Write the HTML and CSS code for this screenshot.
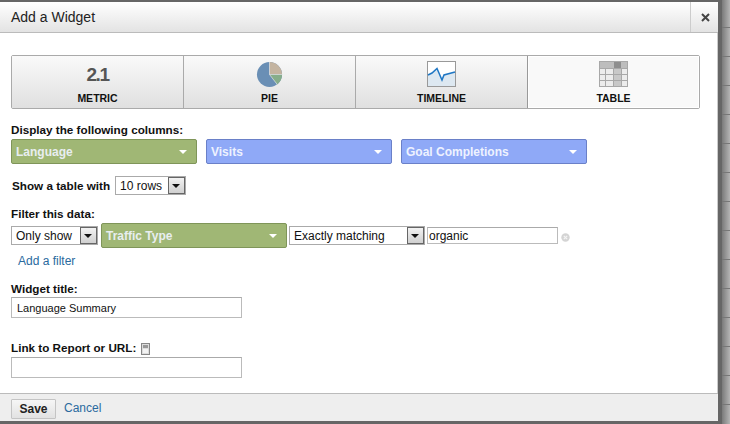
FILE: index.html
```html
<!DOCTYPE html>
<html>
<head>
<meta charset="utf-8">
<title>Add a Widget</title>
<link rel="stylesheet" href="styles.css">
</head>
<body>
<div class="page">
  <div class="dialog">
    <header class="head">
      <h1 class="title">Add a Widget</h1>
      <div class="close">
        <svg width="9" height="9" viewBox="0 0 9 9"><path d="M1 1l7 7M8 1l-7 7" stroke="#444" stroke-width="2"/></svg>
      </div>
    </header>
    <main class="body">
      <div class="tabs">
        <div class="tab">
          <div class="tab-icon metric">2.1</div>
          <div class="tab-label">METRIC</div>
        </div>
        <div class="tab">
          <div class="tab-icon">
            <svg class="pie" width="27" height="27" viewBox="0 0 28 28">
              <circle cx="14" cy="14" r="13" fill="#6a8fb5"/>
              <path d="M14 14V1A13 13 0 0 1 27 14Z" fill="#c4b4a0"/>
              <path d="M14 14H27A13 13 0 0 1 22 24.300Z" fill="#86ad8a"/>
              <path d="M14 14V1M14 14H27M14 14L22 24.300" stroke="#e8e8e8" stroke-width=".7"/>
            </svg>
          </div>
          <div class="tab-label">PIE</div>
        </div>
        <div class="tab">
          <div class="tab-icon">
            <svg width="29" height="26" viewBox="0 0 29 26">
              <rect x=".5" y=".5" width="28" height="25" fill="#fff" stroke="#999"/>
              <path d="M1 14L5 12L10 7.500L15 19L17 14L28 11V25H1Z" fill="#dde8f1"/>
              <path d="M1 14L5 12L10 7.500L15 19L17 14L28 11" fill="none" stroke="#1f77c4" stroke-width="1.500"/>
            </svg>
          </div>
          <div class="tab-label">TIMELINE</div>
        </div>
        <div class="tab active">
          <div class="tab-icon">
            <svg width="29" height="26" viewBox="0 0 29 26">
              <rect width="29" height="26" fill="#a8a8a8"/>
              <rect x="1" y="1" width="27" height="6" fill="#bdbdbd"/>
              <rect x="15" y="1" width="7" height="6" fill="#8e8e8e"/>
              <g fill="#ececec">
                <rect x="1" y="8" width="5" height="5"/><rect x="7" y="8" width="7" height="5"/><rect x="23" y="8" width="5" height="5"/>
                <rect x="1" y="14" width="5" height="5"/><rect x="7" y="14" width="7" height="5"/><rect x="23" y="14" width="5" height="5"/>
                <rect x="1" y="20" width="5" height="5"/><rect x="7" y="20" width="7" height="5"/><rect x="23" y="20" width="5" height="5"/>
              </g>
              <g fill="#c8c8c8">
                <rect x="15" y="8" width="7" height="5"/><rect x="15" y="14" width="7" height="5"/><rect x="15" y="20" width="7" height="5"/>
              </g>
            </svg>
          </div>
          <div class="tab-label">TABLE</div>
        </div>
      </div>

      <div class="label first">Display the following columns:</div>
      <div class="row pills">
        <div class="pill green">Language<span class="arrow"></span></div>
        <div class="pill blue">Visits<span class="arrow"></span></div>
        <div class="pill blue">Goal Completions<span class="arrow"></span></div>
      </div>

      <div class="row show">
        <span class="label inline">Show a table with</span>
        <div class="select s-rows">10 rows<span class="sel-btn"></span></div>
      </div>

      <div class="label filter-label">Filter this data:</div>
      <div class="row filter">
        <div class="select s-only">Only show<span class="sel-btn"></span></div>
        <div class="pill green">Traffic Type<span class="arrow"></span></div>
        <div class="select s-match">Exactly matching<span class="sel-btn"></span></div>
        <input class="input i-value" type="text" value="organic">
        <svg class="remove" width="9" height="9" viewBox="0 0 9 9"><circle cx="4.500" cy="4.500" r="4.200" fill="#d4d4d4"/><path d="M2.800 2.800l3.400 3.400M6.200 2.800l-3.400 3.400" stroke="#f4f4f4" stroke-width="1.200"/></svg>
      </div>
      <a class="link add" href="#">Add a filter</a>

      <div class="label title-label">Widget title:</div>
      <input class="input wide small" type="text" value="Language Summary">

      <div class="label url-label">Link to Report or URL:
        <svg class="doc" width="9" height="12" viewBox="0 0 9 12"><rect x=".5" y=".5" width="8" height="11" fill="#ddd" stroke="#888"/><rect x="2" y="2" width="5" height="3" fill="#999"/><rect x="2" y="6" width="5" height="4" fill="#f4f4f4"/></svg>
      </div>
      <input class="input wide" type="text">
    </main>
    <footer class="foot">
      <button class="save" type="button">Save</button>
      <a class="link cancel" href="#">Cancel</a>
    </footer>
  </div>
  <div class="backdrop"></div>
</div>
</body>
</html>
```
FILE: styles.css
```css
* { box-sizing: border-box; }
html, body { margin: 0; height: 424px; overflow: hidden; }
body { background: #666; font-family: "Liberation Sans", Arial, sans-serif; font-size: 12px; color: #111; }

.page { display: flex; height: 424px; padding-top: 2px; }
.dialog {
  width: 722px; height: 419px; flex: none;
  background: #fff;
  border-right: 4px solid #666;
  display: flex; flex-direction: column;
  box-shadow: inset -1px 0 0 #ccc;
}
.backdrop {
  flex: 1; margin-top: -2px;
  background-color: #8a8a8a;
  background-image:
    repeating-linear-gradient(180deg, transparent 0 28px, #777 28px 29px),
    linear-gradient(90deg, #7a7a7a, #b4b4b4);
  background-position: 0 -1px, 0 0;
}

.head {
  height: 31px; flex: none;
  display: flex; justify-content: space-between;
  background: linear-gradient(180deg, #fff, #e3e3e3);
  border-bottom: 1px solid #bbb;
}
.title { margin: 0; padding: 6px 0 0 11px; font-size: 14px; font-weight: normal; line-height: 18px; color: #222; }
.close { width: 29px; border-left: 1px solid #ccc; display: flex; align-items: center; justify-content: center; margin-right: -1px; }

.body { flex: 1; padding: 22px 0 0 11px; }

.tabs { display: flex; width: 689px; height: 54px; border: 1px solid #aaa; border-radius: 2px; }
.tab {
  flex: 1; display: flex; flex-direction: column; align-items: center;
  background: linear-gradient(180deg, #fafafa, #e0e0e0);
  border-right: 1px solid #aaa;
}
.tab:last-child { border-right: 0; }
.tab.active { background: #f9f9f9; box-shadow: inset 0 0 0 1px #fff; border-left: 1px solid #999; margin-left: -1px; }
.tab-icon { height: 29px; margin-top: 5px; display: flex; align-items: flex-start; justify-content: center; }
.tab-icon svg { display: block; }
.tab-icon .pie { margin-right: 1px; }
.metric { font-size: 19px; font-weight: bold; color: #555; line-height: 28px; letter-spacing: -1.5px; }
.tab-label { font-size: 10.500px; font-weight: bold; line-height: 14px; color: #111; margin-top: 1px; }

.label { font-weight: bold; font-size: 11.700px; line-height: 14px; color: #111; }
.label.first { margin-top: 14px; }
.row { display: flex; align-items: center; }

.pills { gap: 9px; margin-top: 2px; }
.pill {
  width: 186px; height: 25px; flex: none; position: relative;
  border: 1px solid; border-radius: 2px;
  padding-left: 4px;
  font-weight: bold; font-size: 12px; line-height: 24px; color: #e8eef0;
}
.pill.green { background: #a0b775; border-color: #7f9559; }
.pill.blue { background: #8fa9f7; border-color: #6a80c8; color: #eef2ff; }
.arrow {
  position: absolute; right: 9px; top: 10px;
  border-left: 4px solid transparent; border-right: 4px solid transparent; border-top: 4px solid #fff;
}

.select {
  height: 19px; flex: none; position: relative;
  background: #fff; border: 1px solid #aaa;
  padding-left: 4px;
  font-size: 12px; line-height: 18px; color: #111;
}
.sel-btn {
  position: absolute; right: 0; top: 0; width: 17px; height: 17px;
  background: linear-gradient(180deg, #f2f2f2, #d0d0d0);
  border: 1px solid #666;
}
.sel-btn::after {
  content: ""; position: absolute; left: 3px; top: 6px;
  border-left: 4px solid transparent; border-right: 4px solid transparent; border-top: 4px solid #111;
}

.show { margin-top: 12px; gap: 5px; padding-left: 1px; }
.label.inline { white-space: nowrap; }
.s-rows { width: 71px; }

.filter-label { margin-top: 12px; }
.filter { margin-top: 2px; }
.s-only { width: 87px; }
.filter .pill { margin-left: 3px; margin-right: 2px; }
.s-match { width: 136px; }

.input {
  display: block; height: 21px; padding: 0 4px;
  background: #fff; border: 1px solid #bbb;
  border-top-color: #aaa;
  font-family: "Liberation Sans", Arial, sans-serif; font-size: 12px; color: #111;
  outline: 0; border-radius: 0;
}
.i-value { width: 131px; height: 17px; margin-left: 2px; padding: 0 1px; }
.remove { margin: 3px 0 0 3px; }
.wide { width: 231px; }
.small { font-size: 11px; padding-left: 5px; }

.link { color: #2a6a9e; text-decoration: none; font-size: 12px; line-height: 14px; }
.add { display: block; margin: 6px 0 0 7px; }
.cancel { margin-bottom: 2px; }

.title-label { margin-top: 14px; }
.title-label + .input { margin-top: 1px; }
.url-label { margin-top: 23px; display: flex; align-items: center; gap: 5px; height: 14px; }
.url-label + .input { margin-top: 2px; }
.doc { margin-top: 1px; }

.foot {
  height: 28px; flex: none;
  background: #eee; border-top: 1px solid #bbb;
  display: flex; align-items: center; gap: 8px;
  padding: 3px 0 0 11px;
}
.save {
  width: 45px; height: 20px; padding: 0;
  background: linear-gradient(180deg, #f6f6f6, #e2e2e2);
  border: 1px solid #c4c4c4; border-radius: 1px;
  font-family: "Liberation Sans", Arial, sans-serif; font-size: 12px; font-weight: bold; color: #222;
}
```
